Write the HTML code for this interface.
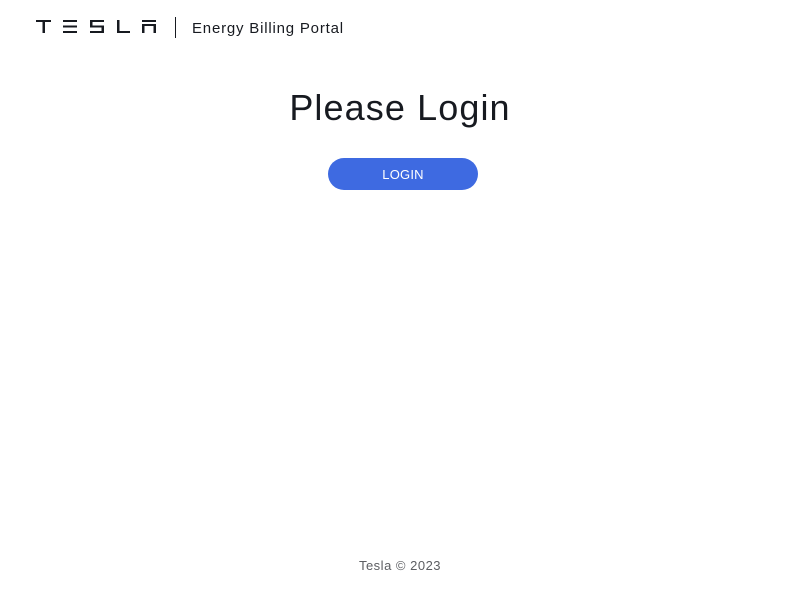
<!DOCTYPE html><html><head><style>
body{margin:0;width:800px;height:600px;background:#fff;font-family:"Liberation Sans",sans-serif;position:relative;color:#171a20}
.sep{position:absolute;left:175px;top:17px;width:1px;height:21px;background:#171a20}
.title{position:absolute;left:192px;top:20px;font-size:15px;color:#171a20;letter-spacing:0.8px}
h1{position:absolute;top:87px;left:0;width:800px;text-align:center;margin:0;font-size:36px;font-weight:normal;color:#171a20;letter-spacing:1.1px}
.btn{position:absolute;left:328px;top:158px;width:150px;height:32px;border-radius:16px;background:#3e6ae1;color:#fff;font-size:13px;text-align:center;line-height:33px;letter-spacing:0.2px}
.ft{position:absolute;top:558px;width:800px;text-align:center;font-size:13px;color:#5c5e62;letter-spacing:0.5px}
</style></head><body>
<svg style="position:absolute;left:0;top:0" width="170" height="50" fill="#171a20">
<rect x="36" y="20" width="15" height="2"/><rect x="42.5" y="22" width="2.5" height="11"/>
<rect x="63" y="20" width="14" height="2"/><rect x="63" y="25.5" width="14" height="2"/><rect x="63" y="31" width="14" height="2"/>
<rect x="90" y="20" width="14" height="2"/><rect x="90" y="20" width="2.5" height="7.5"/><rect x="90" y="25.5" width="14" height="2"/><rect x="101.5" y="25.5" width="2.5" height="7.5"/><rect x="90" y="31" width="14" height="2"/>
<rect x="117" y="20" width="2.5" height="13"/><rect x="117" y="31" width="13" height="2"/>
<rect x="142" y="20" width="14" height="2"/><rect x="142" y="24" width="14" height="2"/><rect x="142" y="24" width="2.5" height="9"/><rect x="153.5" y="24" width="2.5" height="9"/>
</svg>
<div class="sep"></div><div class="title">Energy Billing Portal</div>
<h1>Please Login</h1>
<div class="btn">LOGIN</div>
<div class="ft">Tesla © 2023</div>
</body></html>
